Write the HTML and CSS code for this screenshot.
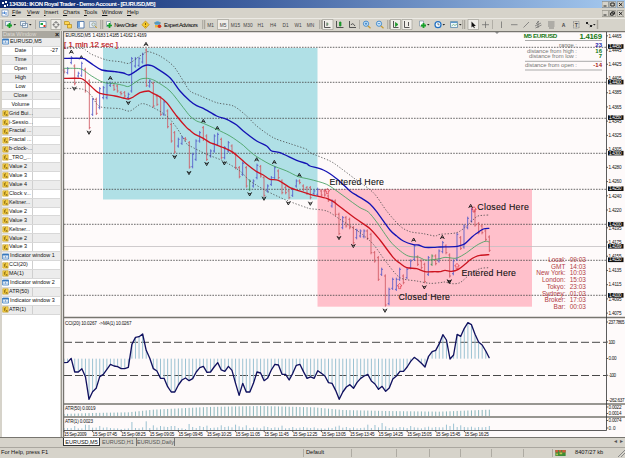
FILE: index.html
```html
<!DOCTYPE html>
<html lang="en">
<head>
<meta charset="utf-8">
<title>134391: IKON Royal Trader - Demo Account - [EURUSD,M5]</title>
<link rel="stylesheet" href="styles.css">
</head>
<body>
<div class="app">
  <header class="titlebar">
    <svg class="logo" viewBox="0 0 8 8"><path d="M1 2h2v2H1zM4 1h2v2H4zM3 5h2v2H3zM6 4h1v2H6z" fill="#fff"/></svg>
    <span class="caption">134391: IKON Royal Trader - Demo Account - [EURUSD,M5]</span>
    <span class="winbtns"><svg viewBox="0 0 22 7"><path class="wb" d="M0 .5h6.6v6H0zM7.2.5h6.6v6H7.2zM15.4.5H22v6h-6.6z"/><path class="wg" d="M1.5 5h3M8.8 2h3.4v3H8.8zM17 2l3.4 3M20.4 2L17 5"/></svg></span>
  </header>
  <nav class="menubar">
    <svg class="logo" viewBox="0 0 8 8"><path d="M1 1h6v6H1z" fill="#fff" stroke="#5b7fb4" stroke-width=".6"/><path d="M2 5V3M3.5 5V2.5M5 6V3" stroke="#1d66c4" stroke-width=".8"/></svg>
    <span class="m1"><u>F</u>ile</span><span class="m2"><u>V</u>iew</span><span class="m3"><u>I</u>nsert</span><span class="m4"><u>C</u>harts</span><span class="m5"><u>T</u>ools</span><span class="m6"><u>W</u>indow</span><span class="m7"><u>H</u>elp</span>
    <span class="winbtns"><svg viewBox="0 0 22 7"><path class="wb" d="M0 .5h6.6v6H0zM7.2.5h6.6v6H7.2zM15.4.5H22v6h-6.6z"/><path class="wg" d="M1.5 5h3M8.6 3h2.6v2.2H8.600zM9.800 3V1.800h2.600v2.400h-1M17 2l3.400 3M20.400 2L17 5"/></svg></span>
  </nav>
  <div class="toolbar">
    <svg class="tools" viewBox="0 18 625 12">
      <g class="grip"><path d="M2.500 19v9M102.500 19v9M204.500 19v9M321.500 19v9M389.500 19v9M464.500 19v9M597.500 19v9"/></g>
      <g class="sep"><path d="M35.500 19v9M100.500 19v9M359.500 19v9M202.500 19v9M319.500 19v9M387.500 19v9M462.500 19v9M492.500 19v9"/></g>
      <g class="pressed"><path d="M51 18.500h10v10H51zM217.500 18.500h11v10h-11zM322.500 18.500h10.500v10h-10.500zM390.500 18.500h10v10h-10zM402 18.500h10v10h-10zM468 18.500h10.500v10H468z"/></g>
      <path d="M5.500 20.500h5v4h-5zM20.500 20.500h5v4h-5zM22.500 22.500h5v4h-5z" fill="#eef5fb" stroke="#6682a0" stroke-width=".7"/>
      <path d="M9.500 22v5M7 24.500h5" stroke="#17a028" stroke-width="1.800"/>
      <path d="M13.500 23h2.600l-1.300 1.500zM29 23h2.600l-1.300 1.500z" fill="#222"/>
      <path d="M39.500 20.500h6.500v6h-6.500z" fill="#fff" stroke="#4a7da0" stroke-width=".7"/><path d="M40.500 22h2.500v2h-2.500z" fill="#18a445"/><path d="M43.500 24h2v2h-2z" fill="#d63a20"/>
      <circle cx="56" cy="23.700" r="2.600" fill="none" stroke="#777" stroke-width=".7"/><path d="M56 20v2.500M56 25v2.500M52.500 23.700H55M57 23.700h2.500" stroke="#555" stroke-width=".7"/>
      <path d="M64.500 20.500h4l1 1v2h-5zM67.500 23.500h4v3.500h-4z" fill="#ffd653" stroke="#b68b15" stroke-width=".7"/>
      <path d="M77.500 20.500h6.500v6.500h-6.500z" fill="#fff" stroke="#3b68a5" stroke-width=".8"/><path d="M78 21h2v5.500h-2z" fill="#6fa4de"/>
      <path d="M89.500 20.500H96v6h-6.500z" fill="#e6eef6" stroke="#8fa2b5" stroke-width=".7"/><circle cx="93.500" cy="23.500" r="1.700" fill="#cfe4f4" stroke="#8a8a60" stroke-width=".6"/><path d="M95 25l1.800 2" stroke="#caa22c"/>
      <path d="M106.500 20.500h4v5h-4z" fill="#fff" stroke="#7890a5" stroke-width=".7"/><path d="M109.500 22v5M107 24.500h5" stroke="#17a028" stroke-width="1.700"/>
      <path d="M145.500 20l3.700 3.700-3.700 3.700-3.700-3.700z" fill="#f5c92c" stroke="#b28312" stroke-width=".6"/><path d="M145.500 22v2M145.500 25v.7" stroke="#644700" stroke-width=".8"/>
      <circle cx="157.500" cy="22.500" r="2.600" fill="#6aaee0"/><path d="M155 24h5v2.500h-5z" fill="#e8b33c"/><circle cx="159.500" cy="25.300" r="1.800" fill="#d4311f"/><path d="M154 22h7" stroke="#377" stroke-width=".7"/>
      <g class="ink"><path d="M324.500 20v6.500h6M327 21.500v3.500M336.500 20v6.500h7M349.500 20v6.500h6.500M351 24q1.500-3 4 1M393.500 20v6.500h5M404.500 20v6.500h5M408.500 21v4"/></g>
      <path d="M327 23h1.500M339.500 21h1.500v4h-1.500zM395.500 21.500l2.500 2-2.500 2z" fill="#17a028" stroke="#178d25" stroke-width=".7"/>
      <g stroke="#c79a32" stroke-width="1.200"><path d="M367.500 24.500l3 2.700M380.500 24.500l3 2.700"/></g>
      <g fill="#d8efff" stroke="#367fc5" stroke-width=".9"><circle cx="366" cy="22.700" r="2.600"/><circle cx="379" cy="22.700" r="2.600"/><path d="M364.700 22.700h2.600M366 21.400V24M377.700 22.700h2.600"/></g>
      <path d="M419.500 20h4v5h-4z" fill="#fff" stroke="#7890a5" stroke-width=".7"/><path d="M423.500 22v5M421 24.500h5" stroke="#17a028" stroke-width="1.800"/>
      <circle cx="438" cy="23.700" r="3" fill="#eef8ff" stroke="#2170c2" stroke-width="1.200"/><path d="M438 22v1.800h1.500" stroke="#333" stroke-width=".6" fill="none"/>
      <path d="M450.500 20.500h7v6h-7z" fill="#edf5fa" stroke="#5d8bac" stroke-width=".8"/><path d="M451 21h6v1h-6z" fill="#5d99cc"/><path d="M451.500 25l2-1.500 1.500 1 2-1.500" fill="none" stroke="#409a55" stroke-width=".6"/>
      <path d="M427 23h2.600l-1.300 1.500zM442.500 23h2.600l-1.300 1.500zM459 23h2.600l-1.300 1.500zM593 23h2.600l-1.300 1.500z" fill="#222"/>
      <path d="M471.500 20.500v6l1.500-1.300 1 2 .8-.4-.9-1.900h2z" fill="#111"/>
      <g class="ink thin"><path d="M485.500 20.500v6.500M482 23.700h7M501.500 20.500v6.500M511 23.700h6.500M523.500 26.500l5.500-5.500M535 25l6-3M535.500 27l6-3M536 23l3-3M538 27v-7M548 21h6.500M548 23h6.500M548 25h6.500M549 27h5"/><path d="M573.500 20.500h5.500v6.500h-5.500z" stroke-dasharray=".8 .6"/><path d="M586.500 22l3 2M589.500 26l3-1.500"/></g>
      <path d="M586 21h2v2h-2zM590 24h2v2h-2z" fill="#222"/>
      <g class="tooltext"><text x="114.300" y="25.800" textLength="23">New Order</text><text x="164" y="25.800" textLength="34">Expert Advisors</text></g>
      <g class="frames"><text x="210.500" y="25.500">M1</text><text x="223" y="25.500">M5</text><text x="235.500" y="25.500">M15</text><text x="248" y="25.500">M30</text><text x="260.500" y="25.500">H1</text><text x="273" y="25.500">H4</text><text x="285.500" y="25.500">D1</text><text x="298" y="25.500">W1</text><text x="310.500" y="25.500">MN</text></g>
      <text class="glyph" x="563.500" y="26">A</text><text class="glyph" x="576.300" y="26">T</text>
    </svg>
  </div>
  <main class="workspace">
    <aside class="datawin">
      <div class="dw-title"><span>Data Window</span><b>×</b></div>
      <div class="rows" id="rows"></div>
    </aside>
    <section class="chart">
      <svg id="plot" viewBox="62 30 563 407">
        <rect x="62" y="30" width="563" height="407" fill="#fefafa"/>
        <rect x="103" y="47" width="214.500" height="151.500" fill="#b0e0e6"/>
        <rect x="317.500" y="188" width="214.500" height="117.700" fill="#ffc0cb"/>
        <path class="bid" d="M64 245.500H606"/>
        <g id="levels"></g>
        <g id="price"></g>
        <g id="oscillators"></g>
        <path class="frame" d="M63 30.500H625M63.500 30V437M64 316.500H625M64 403H625M64 416H625"/>
        <path class="axis" d="M606.500 31V429.500M64 429.500H606.500"/>
        <path d="M495 31h4l-2 2z" fill="#888"/>
        <g id="scale"></g>
        <text class="tiny" x="65.500" y="36.400" textLength="81">EURUSD,M5&#160; 1.4183 1.4185 1.4162 1.4169</text>
        <text class="countdown" x="64" y="45.800" textLength="54">[ 1 min 12 sec ]</text>
        <g class="note"><text x="329.500" y="184" textLength="54.500">Entered Here</text><text x="398.500" y="298.800" textLength="51.500">Closed Here</text><text x="477.300" y="208.500" textLength="51.500">Closed Here</text><text x="461.500" y="275" textLength="54.500">Entered Here</text></g>
        <path d="M525 39.500h77M525 60.300h77M525 69h77" stroke="#a9a9a9"/>
        <g class="green"><text x="523.800" y="37.400" textLength="33.500">M5 EURUSD</text><text class="big" x="602" y="38.200" textLength="22.500">1.4169</text></g>
        <g class="dist"><text x="577" y="46" textLength="18">range :</text><text x="577" y="51.700" textLength="50">distance from high :</text><text x="577" y="57" textLength="48">distance from low :</text><text x="577" y="65.800" textLength="52">distance from open :</text></g>
        <g class="distv"><text x="602" y="46" fill="#1c1ca8">23</text><text x="602" y="51.700" fill="#147814">16</text><text x="602" y="57" fill="#147814">7</text><text x="602" y="65.800" fill="#a51414">-14</text></g>
        <g id="clocks"></g>
      </svg>
    </section>
  </main>
  <div class="tabs"><span class="tab on">EURUSD,M5</span><span class="tab">EURUSD,H1</span><span class="tab last">EURUSD,Daily</span><span class="arrows">◂&#160;&#160;▸</span></div>
  <footer class="status">
    <span class="help">For Help, press F1</span><span class="profile">Default</span><span class="c1"></span><span class="c2"></span><span class="c3"></span><span class="c4"></span><span class="c5"></span><span class="c6"></span>
    <span class="traffic"><svg viewBox="0 0 12 7"><path d="M0 0h12v7H0z" fill="#3d8c35"/><path d="M0 0h3v3H0zM4 0h3v2H4zM8 0h4v3H8z" fill="#cf5a3c"/><path d="M1 4h2v2H1zM5 3h3v2H5z" fill="#c7c14f"/></svg>8407/27 kb</span>
    <svg class="resize" viewBox="0 0 8 8"><path d="M1 8l7-7M4 8l4-4" stroke="#888"/></svg>
  </footer>
</div>
<script src="chart.js"></script>
</body>
</html>
```
FILE: styles.css
```css
* { box-sizing: border-box; }
body { margin: 0; font: 6px/1 "Liberation Sans", Arial, sans-serif; color: #111; }
.app { display: flex; flex-direction: column; width: 625px; height: 458px; background: #d6d3ca; overflow: hidden; }
svg { display: block; }
.titlebar { flex: 0 0 8px; display: flex; align-items: center; background: linear-gradient(90deg, #0b266c, #3e5f9f 40%, #a6caf0); color: #fff; }
.logo { width: 8px; height: 8px; margin-left: 1px; }
.caption { margin-left: 0; font-weight: bold; font-size: 6px; letter-spacing: -.42px; white-space: nowrap; }
.winbtns { margin-left: auto; margin-right: 1px; width: 22px; }
.winbtns svg { width: 22px; height: 7px; }
.wb { fill: #d6d3ca; stroke: #77746c; stroke-width: .5; }
.wg { fill: none; stroke: #111; stroke-width: .9; }
.menubar { flex: 0 0 10px; display: flex; align-items: center; font-size: 5.7px; }
.menubar > span { white-space: nowrap; }
.menubar u { text-decoration-thickness: .5px; text-underline-offset: .5px; }
.m1 { width: 15px; margin-left: 3px; }
.m2 { width: 17px; }
.m3 { width: 19px; }
.m4 { width: 21px; }
.m5 { width: 18px; }
.m6 { width: 25px; }
.m7 { width: 14px; }
.toolbar { flex: 0 0 12px; border-top: 1px solid #eceae4; }
.tools { width: 625px; height: 12px; }
.grip path { stroke: #aaa69d; stroke-width: 1.5; }
.sep path { stroke: #98958d; stroke-width: .6; }
.pressed path { fill: #efede8; stroke: #96938b; stroke-width: .6; }
.ink path { fill: none; stroke: #444; stroke-width: .9; }
.ink.thin path { stroke: #666; stroke-width: .7; }
.tooltext text { font-size: 5.8px; }
.frames text { font-size: 4.8px; text-anchor: middle; fill: #444; }
.glyph { font-size: 5px; font-weight: bold; text-anchor: middle; fill: #444; }
.workspace { flex: 1; display: flex; min-height: 0; overflow: hidden; }
.datawin { flex: 0 0 62px; padding: 0 1px 0 2px; border-right: 1px solid #99968f; }
.dw-title { height: 7px; display: flex; align-items: center; justify-content: space-between; color: #dddad3; background: #aaa79f; padding: 0 1px; font-size: 5.6px; }
.dw-title b { color: #111; font-size: 7px; line-height: 6px; }
.rows { height: 400px; background: #fff; }
.row { height: 8.93px; display: grid; grid-template-columns: 7px 23px 1fr; align-items: center; border-bottom: .5px solid #d8d8d8; font-size: 5.4px; white-space: nowrap; background: linear-gradient(90deg, transparent 30px, #cfcfcf 30px, #cfcfcf 31px, transparent 31px); }
.row:nth-child(odd) { background-color: #ececec; }
.row.wide { grid-template-columns: 8px 1fr; background-image: none; }
.row .val { text-align: right; padding-right: 2px; }
.row .name.center { text-align: center; }
.row svg { width: 7px; height: 7px; }
.chart { flex: 0 0 563px; height: 407px; }
#plot { width: 563px; height: 407px; }
.bid { stroke: #c3bfc1; stroke-width: .8; }
.level { stroke: #444; stroke-width: .8; stroke-dasharray: 1.6 1.2; }
.up, .down, .flat { fill: none; stroke-width: 2.5; }
.up { stroke: #5058c8; }
.down { stroke: #cf5760; }
.flat { stroke: #3a9150; }
.band { fill: none; stroke-linejoin: round; }
.band.top { stroke: #1413b4; stroke-width: 4; }
.band.mid { stroke: #45a060; stroke-width: 2.6; }
.band.low { stroke: #cc1420; stroke-width: 4; }
.band.outer { stroke: #444; stroke-width: 2.3; stroke-dasharray: 4 5; }
.fractal { fill: none; stroke: #111; stroke-width: 2.6; }
.trade { fill: none; stroke: #df3040; stroke-width: 2; }
.cci { fill: none; stroke: #11115f; stroke-width: 4; stroke-linejoin: round; }
.hist { stroke: #93bdcf; stroke-width: 2.8; }
.atr { stroke: #82b1b7; stroke-width: 2.8; }
.limit { stroke: #333; stroke-width: .9; stroke-dasharray: 8 3; }
.frame { fill: none; stroke: #77756f; stroke-width: 1.4; }
.axis { fill: none; stroke: #333; stroke-width: .8; }
.tiny { font: 4.6px "Liberation Sans", Arial, sans-serif; fill: #111; }
.tag { fill: #111; }
.tagtext { fill: #fff; }
.countdown { font: 7.8px "Liberation Sans", Arial, sans-serif; fill: #bd171d; stroke: #bd171d; stroke-width: .2; }
.note text { font: 8.8px "Liberation Sans", Arial, sans-serif; fill: #111; stroke: #111; stroke-width: .1; }
.green text { font: bold 6.2px "Liberation Sans", Arial, sans-serif; fill: #147814; }
.green .big { font-size: 7.8px; text-anchor: end; }
.dist text { font: 5.9px "Liberation Sans", Arial, sans-serif; fill: #777; text-anchor: end; }
.distv text { font: bold 6px "Liberation Sans", Arial, sans-serif; text-anchor: end; }
#clocks text { font: 6.5px "Liberation Sans", Arial, sans-serif; fill: #b23a44; text-anchor: end; }
.tabs { flex: 0 0 10px; display: flex; align-items: flex-start; padding-left: 63px; border-top: 1px solid #77756f; font-size: 5.5px; color: #555; }
.tab { height: 8px; padding-top: 2px; width: 37px; text-align: center; border-right: .8px solid #777; white-space: nowrap; }
.tab.on { background: #fff; color: #111; border: .6px solid #333; border-top: 0; }
.tab.last { width: 38px; }
.arrows { margin-left: auto; padding: 1px 2px; }
.status { flex: 0 0 11px; display: flex; align-items: center; border-top: 1px solid #aaa79f; font-size: 5.7px; }
.status > span { height: 8px; padding-top: 1px; border-right: 1px solid #aeaba3; white-space: nowrap; }
.help { width: 304px; padding-left: 1px; }
.profile { width: 48px; padding-left: 2px; }
.c1 { width: 45px; }
.c2 { width: 33px; }
.c3 { width: 31px; }
.c4 { width: 31px; }
.c5 { width: 32px; }
.c6 { width: 29px; }
.status .traffic { width: 64px; display: flex; padding-left: 2px; gap: 9px; border: 0; }
.traffic svg { width: 11px; height: 6px; }
.resize { width: 8px; height: 8px; }
```
FILE: chart.js
```js
const byId = id => document.getElementById(id);

/* Data window */
const fx = '<svg viewBox="0 0 7 7"><path d="M.7.7h5.500v5.500H.7z" fill="#f6ce45" stroke="#ba9425" stroke-width=".5"/><path d="M3.800 1.500Q2.600 1.500 2.600 3v2M1.800 3h2M3.800 4l1.500 1.800M5.300 4L3.800 5.800" fill="none" stroke="#6d5000" stroke-width=".6"/></svg>';
const win = '<svg viewBox="0 0 7 7"><path d="M.6 1h6v5H.6z" fill="#fff" stroke="#3476bd" stroke-width=".8"/><path d="M.6 1h6v1.500H.6z" fill="#3476bd"/><path d="M2 5V3.500M3.500 5V3M5 5V3.500" stroke="#3476bd" stroke-width=".6"/></svg>';
const rows = ['#EURUSD,M5', '-Date', '-Time', '-Open', '-High', '-Low', '-Close', '-Volume', 'Grid Bui...', 'i-Sessio...', 'Fractal ...', 'Fractal ...', 'b-clock-...', '_TRO_...', 'Value 2', 'Value 3', 'Value 4', 'Clock v...', 'Keltner...', 'Value 2', 'Value 3', 'Keltner...', 'Value 2', 'Value 3', '#Indicator window 1', 'CCI(20)', 'MA(1)', '#Indicator window 2', 'ATR(50)', '#Indicator window 3', 'ATR(1)'];
byId('rows').innerHTML = rows.map(r => {
  if (r[0] === '#') return `<div class="row wide">${win}<span class="name">${r.slice(1)}</span></div>`;
  if (r[0] === '-') return `<div class="row"><i></i><span class="name center">${r.slice(1)}</span><span class="val">${r === '-Date' ? '-27' : ''}</span></div>`;
  return `<div class="row">${fx}<span class="name">${r}</span><span class="val"></span></div>`;
}).join('');

/* Price levels and scale */
const yOf = p => 45.5 + (4450 - p) * 0.711;
const big = [4450, 4400, 4350, 4300, 4250, 4200, 4150, 4100];
byId('levels').innerHTML = big.map(p => `<path class="level" d="M64 ${Math.round(yOf(p)) + .3}H606"/>`).join('');
let s = '';
const label = (y, t, w = 13) => `<path class="axis" d="M606.500 ${y}h1.500"/><text class="tiny" x="608.500" y="${y + 1.7}" textLength="${w}">${t}</text>`;
[4465, 4445, 4425, 4405, 4385, 4365, 4345, 4325, 4305, 4280, 4260, 4240, 4220, 4195, 4175, 4155, 4135, 4115, 4095, 4075].forEach(p => { s += label(yOf(p), '1.' + p); });
[...big, 4169].forEach(p => {
  const y = yOf(p);
  s += `<rect class="tag" x="608" y="${y - 2.3}" width="15.500" height="4.600"/><text class="tiny tagtext" x="609" y="${y + 1.6}" textLength="12.500">1.${p}</text>`;
});
[[321, '237.7865', 16], [341, '100', 6.5], [357.5, '0.00', 8], [374.3, '-100', 7.5], [399.5, '-262.637', 16], [406, '0.0022', 13], [412.5, '0.0014', 13], [419.5, '0.0074', 13], [427, '0.0', 7]].forEach(v => { s += label(...v); });
['2009', '07:45', '08:25', '09:05', '09:45', '10:25', '11:05', '11:45', '12:25', '13:05', '13:45', '14:25', '15:05', '15:45', '16:25'].forEach((t, i) => {
  const x = 64 + i * 28.6;
  s += `<path class="axis" d="M${x} 429.500v1.500"/><text class="tiny" x="${x}" y="435.300" textLength="${i ? 24.5 : 22.5}">15 Sep ${t}</text>`;
});
byId('scale').innerHTML = s;

/* Price panes: origin, OHLC bars "x top bottom kind", bands, fractals and trade marks, in thirds of a pixel */
const panes = [
  { at: [60, 40],
    bars: '12 82 98 r,23 78 100 b,34 45 70 b,44 70 133 r,55 92 110 b,65 62 108 b,76 80 155 r,88 115 265 r,98 170 225 b,109 170 222 r,119 138 205 b,130 135 175 b,141 122 175 b,151 122 138 b,162 128 150 r,172 130 155 r,183 150 163 r,194 150 170 r,205 155 175 b,215 48 155 b,226 48 80 b,237 48 78 b,248 35 68 b,259 22 138 r,269 115 140 b,280 122 200 r,291 160 195 r,302 165 225 r,312 178 225 b,323 205 262 r,334 245 305 r,344 270 338 r,355 290 320 b,366 285 312 b,376 288 300 r,388 300 383 r',
    up: '34 32,64 49,151 111,258 9', down: '43 143,87 275,205 186,344 348,387 396', trade: '' },
  { at: [190, 90],
    bars: '8 185 232 b,18 145 210 b,29 120 155 b,40 105 150 r,50 130 210 r,62 175 200 b,73 130 185 b,83 125 165 b,94 140 205 r,104 165 205 b,115 150 185 b,126 160 188 r,137 185 235 r,148 225 262 r,158 212 255 b,169 225 290 r,179 265 300 g,190 265 290 b,201 218 265 b,212 222 260 r,222 255 318 r,233 280 305 b,244 255 285 b,254 225 265 b,265 235 265 r,276 265 310 r,287 285 310 r,297 295 325 r,308 290 318 b,319 265 290 b,329 265 280 r,340 280 300 r,351 285 312 r,361 285 325 r,372 295 312 b',
    up: '40 90,82 111,200 205,253 213,328 252', down: '50 219,103 217,179 310,222 323,295 337,361 338', trade: '' },
  { at: [310, 165],
    bars: '23 65 90 b,34 70 92 r,44 70 92 r,55 85 108 r,66 100 125 b,76 100 150 r,87 140 208 r,98 150 190 b,108 150 185 r,119 155 190 r,130 180 235 r,140 188 220 b,151 190 215 b,162 190 217 b,172 190 222 r,183 200 265 r,194 255 290 r,205 270 345 r,215 305 330 b,226 325 422 r,237 365 418 b,248 335 372 b,259 335 375 b,269 305 345 b,280 325 355 r,291 305 340 b,302 280 310 b,313 235 285 b,323 268 300 r,334 280 310 r,344 290 352 r,355 270 330 b,366 265 300 g,377 265 298 r,387 250 290 b,398 225 262 b,408 235 265 r,419 262 335 r,430 280 328 b',
    up: '311 221,397 213', down: '87 216,130 240,225 434,343 364,418 347', trade: '52 75,269 360,441 300' },
  { at: [440, 175],
    bars: '51 170 255 b,62 180 222 r,72 145 218 b,83 122 160 b,95 95 140 b,105 100 152 r,116 138 175 r,126 145 175 r,137 160 195 r,148 178 228 r',
    up: '92 90', down: '28 317', trade: '102 100' }
];
const kinds = { r: 'down', b: 'up', g: 'flat' };
const pairs = t => t ? t.split(',').map(p => p.split(' ')) : [];
let out = '';
panes.forEach(p => {
  out += `<g transform="translate(${p.at}) scale(.33333)">`;
  pairs(p.bars).forEach(([x, a, b, k]) => {
    const o = k === 'r' ? +a + 5 : b - 5, c = k === 'r' ? b - 5 : +a + 5;
    out += `<path class="${kinds[k]}" d="M${x} ${a}V${b}M${x - 4} ${o}h4M${x} ${c}h4"/>`;
  });
  pairs(p.up).forEach(([x, y]) => { out += `<path class="fractal" d="M${x - 6} ${+y + 6}L${x} ${y - 5}L${+x + 6} ${+y + 6}M${x - 4} ${+y + 2}h8"/>`; });
  pairs(p.down).forEach(([x, y]) => { out += `<path class="fractal" d="M${x - 6} ${y - 6}L${x} ${+y + 5}L${+x + 6} ${y - 6}M${x - 4} ${y - 2}h8"/>`; });
  pairs(p.trade).forEach(([x, y]) => { out += `<path class="trade" d="M${x - 7} ${y}l7 -8l7 8h-4v8h-6v-8z"/>`; });
  out += '</g>';
});

/* Keltner bands, each a list of [origin, points] joined into one curve */
const origins = [[60, 40], [190, 90], [310, 165], [440, 175]];
const bands = {
  top: ['12 52,66 52,76 55,100 72,125 87,165 92,190 96,207 102,225 92,248 76,262 72,275 74,290 82,330 110,360 150', '0 30,20 44,40 52,80 75,105 83,120 90,140 102,160 120,200 150,230 165,245 180,270 185,320 208,350 218', '0 0,40 12,80 38,120 75,140 88,160 100,180 114,200 137,240 192,260 210,280 225,310 236,325 237,345 244,375 244', '0 213,45 212,60 209,75 203,95 184,110 172,130 159,148 157'],
  mid: ['12 82,45 82,66 85,95 105,130 124,165 128,190 133,207 136,240 115,262 112,275 115,290 122,330 150,370 200', '0 75,20 90,40 97,80 115,120 135,160 163,190 190,240 220,290 240,325 257', '0 40,50 55,90 82,120 104,150 125,175 138,200 168,240 225,265 250,290 268,310 273,325 273,345 282,360 282', '0 248,15 244,45 247,60 242,80 230,110 208,135 196,148 198'],
  low: ['12 112,60 112,72 117,85 128,105 147,120 157,165 165,190 171,205 174,220 168,240 155,265 150,275 155,300 168,320 185,350 225,380 260', '0 118,15 130,40 142,60 155,75 160,95 168,105 172,130 185,165 215,200 242,220 252,240 265,265 268,300 290,325 299', '0 85,50 97,70 107,90 122,140 160,180 188,210 222,250 275,270 292,290 305,320 308,345 317,375 317', '0 287,15 283,35 286,55 280,75 265,90 252,105 243,120 238,148 236'],
  outer: ['12 22,66 22,78 28,95 40,140 57,180 62,207 67,235 48,250 38,265 32,300 45,340 75,370 120', '0 0,30 14,80 35,130 45,170 75,200 105,250 140,300 158,350 175', '0 -40,60 -15,90 5,130 35,190 80,230 135,270 180,300 197,340 203,375 210', '0 175,50 170,80 150,110 122,130 118,148 117'],
  'outer lower': ['12 142,70 145,95 165,120 197,180 203,210 210,245 188,280 200,320 225,350 260', '-10 158,0 165,50 190,100 210,150 240,180 270,230 300,290 328,350 350', '0 128,50 135,90 160,150 200,190 235,230 290,270 335,320 345,360 352', '0 320,15 318,35 323,60 320,90 295,120 278,148 275']
};
const curve = pts => {
  let d = `M${pts[0]}`;
  for (let i = 0; i < pts.length - 1; i++) {
    const a = pts[Math.max(i - 1, 0)], b = pts[i], c = pts[i + 1], e = pts[Math.min(i + 2, pts.length - 1)];
    d += `C${b[0] + (c[0] - a[0]) / 7} ${b[1] + (c[1] - a[1]) / 7} ${c[0] - (e[0] - b[0]) / 7} ${c[1] - (e[1] - b[1]) / 7} ${c}`;
  }
  return d;
};
out += '<g transform="scale(.33333)">';
Object.entries(bands).forEach(([name, segs]) => {
  const pts = segs.flatMap((t, i) => pairs(t).map(([x, y]) => [origins[i][0] * 3 + +x, origins[i][1] * 3 + +y]));
  out += `<path class="band ${name}" d="${curve(pts)}"/>`;
});
byId('price').innerHTML = out + '</g>';

/* CCI and ATR */
const cci = [155,154,142,183,183,173,197,265,242,232,197,190,175,160,165,167,173,173,169,100,79,77,69,118,142,173,180,202,202,227,243,243,222,207,201,209,203,183,170,166,184,183,168,155,177,181,166,178,217,253,217,243,243,217,183,186,209,201,177,160,162,
  190,190,207,187,163,160,182,202,198,202,179,187,195,215,217,238,265,243,228,221,232,214,202,195,190,210,219,235,226,241,231,204,195,181,181,168,151,139,147,157,168,136,122,118,98,71,87,144,132,70,76,52,35,41,70,93,102,120,141];
const xs = cci.map((_, i) => 12 + i * 1276 / (cci.length - 1));
const knots = [[0, 6], [8, 9], [18, 11], [25, 19], [40, 27], [55, 30], [70, 26], [78, 18], [90, 15], [105, 13], [112, 16], [119, 19]];
const atr50 = i => {
  const k = knots.findIndex(n => n[0] >= i);
  if (k < 1) return knots[0][1];
  const [a, u] = knots[k - 1], [b, v] = knots[k];
  return u + (v - u) * (i - a) / (b - a);
};
const atr1 = [6,6,6,12,5,5,16,15,7,7,12,7,8,6,5,5,3,4,5,24,6,5,8,26,6,14,7,12,10,9,12,12,6,5,3,18,9,6,12,9,13,6,7,8,14,9,11,8,16,11,8,14,6,8,7,5,11,9,6,8,7,13,5,6,9,5,7,9,7,6,8,5,5,4,7,6,10,13,7,9,6,8,5,6,7,16,6,15,8,21,11,6,8,5,9,8,6,12,8,7,5,8,10,7,9,8,8,16,12,19,9,14,9,8,10,7,9,8,9,12];
let osc = '<path class="limit" d="M64 341.300H606M64 374.500H606"/><g transform="translate(60 310) scale(.33333)">';
cci.forEach((y, i) => {
  const x = xs[i];
  osc += `<path class="hist" d="M${x} 143V${y}M${x} 357v-${atr1[i] || 7}"/><path class="atr" d="M${x} 315v-${atr50(i)}"/>`;
});
osc += `<polyline class="cci" points="${cci.map((y, i) => xs[i] + ',' + y).join(' ')}"/></g>`;
osc += '<text class="tiny" x="65" y="323.500" textLength="66.500">CCI(20) 10.0267 &#160;-&gt;MA(1) 10.0267</text><text class="tiny" x="65" y="409.300" textLength="30.500">ATR(50) 0.0019</text><text class="tiny" x="65" y="422.300" textLength="28">ATR(1) 0.0023</text>';
byId('oscillators').innerHTML = osc;

/* Session clocks */
byId('clocks').innerHTML = [['Local:', '09:03'], ['GMT', '14:03'], ['New York:', '10:03'], ['London:', '15:03'], ['Tokyo:', '23:03'], ['Sydney:', '01:03'], ['Broker:', '17:03'], ['Bar:', '00:03']]
  .map(([n, t], i) => `<text x="565.500" y="${260.8 + i * 6.75}">${n}</text><text x="586" y="${260.8 + i * 6.75}">${t}</text>`).join('');
```
